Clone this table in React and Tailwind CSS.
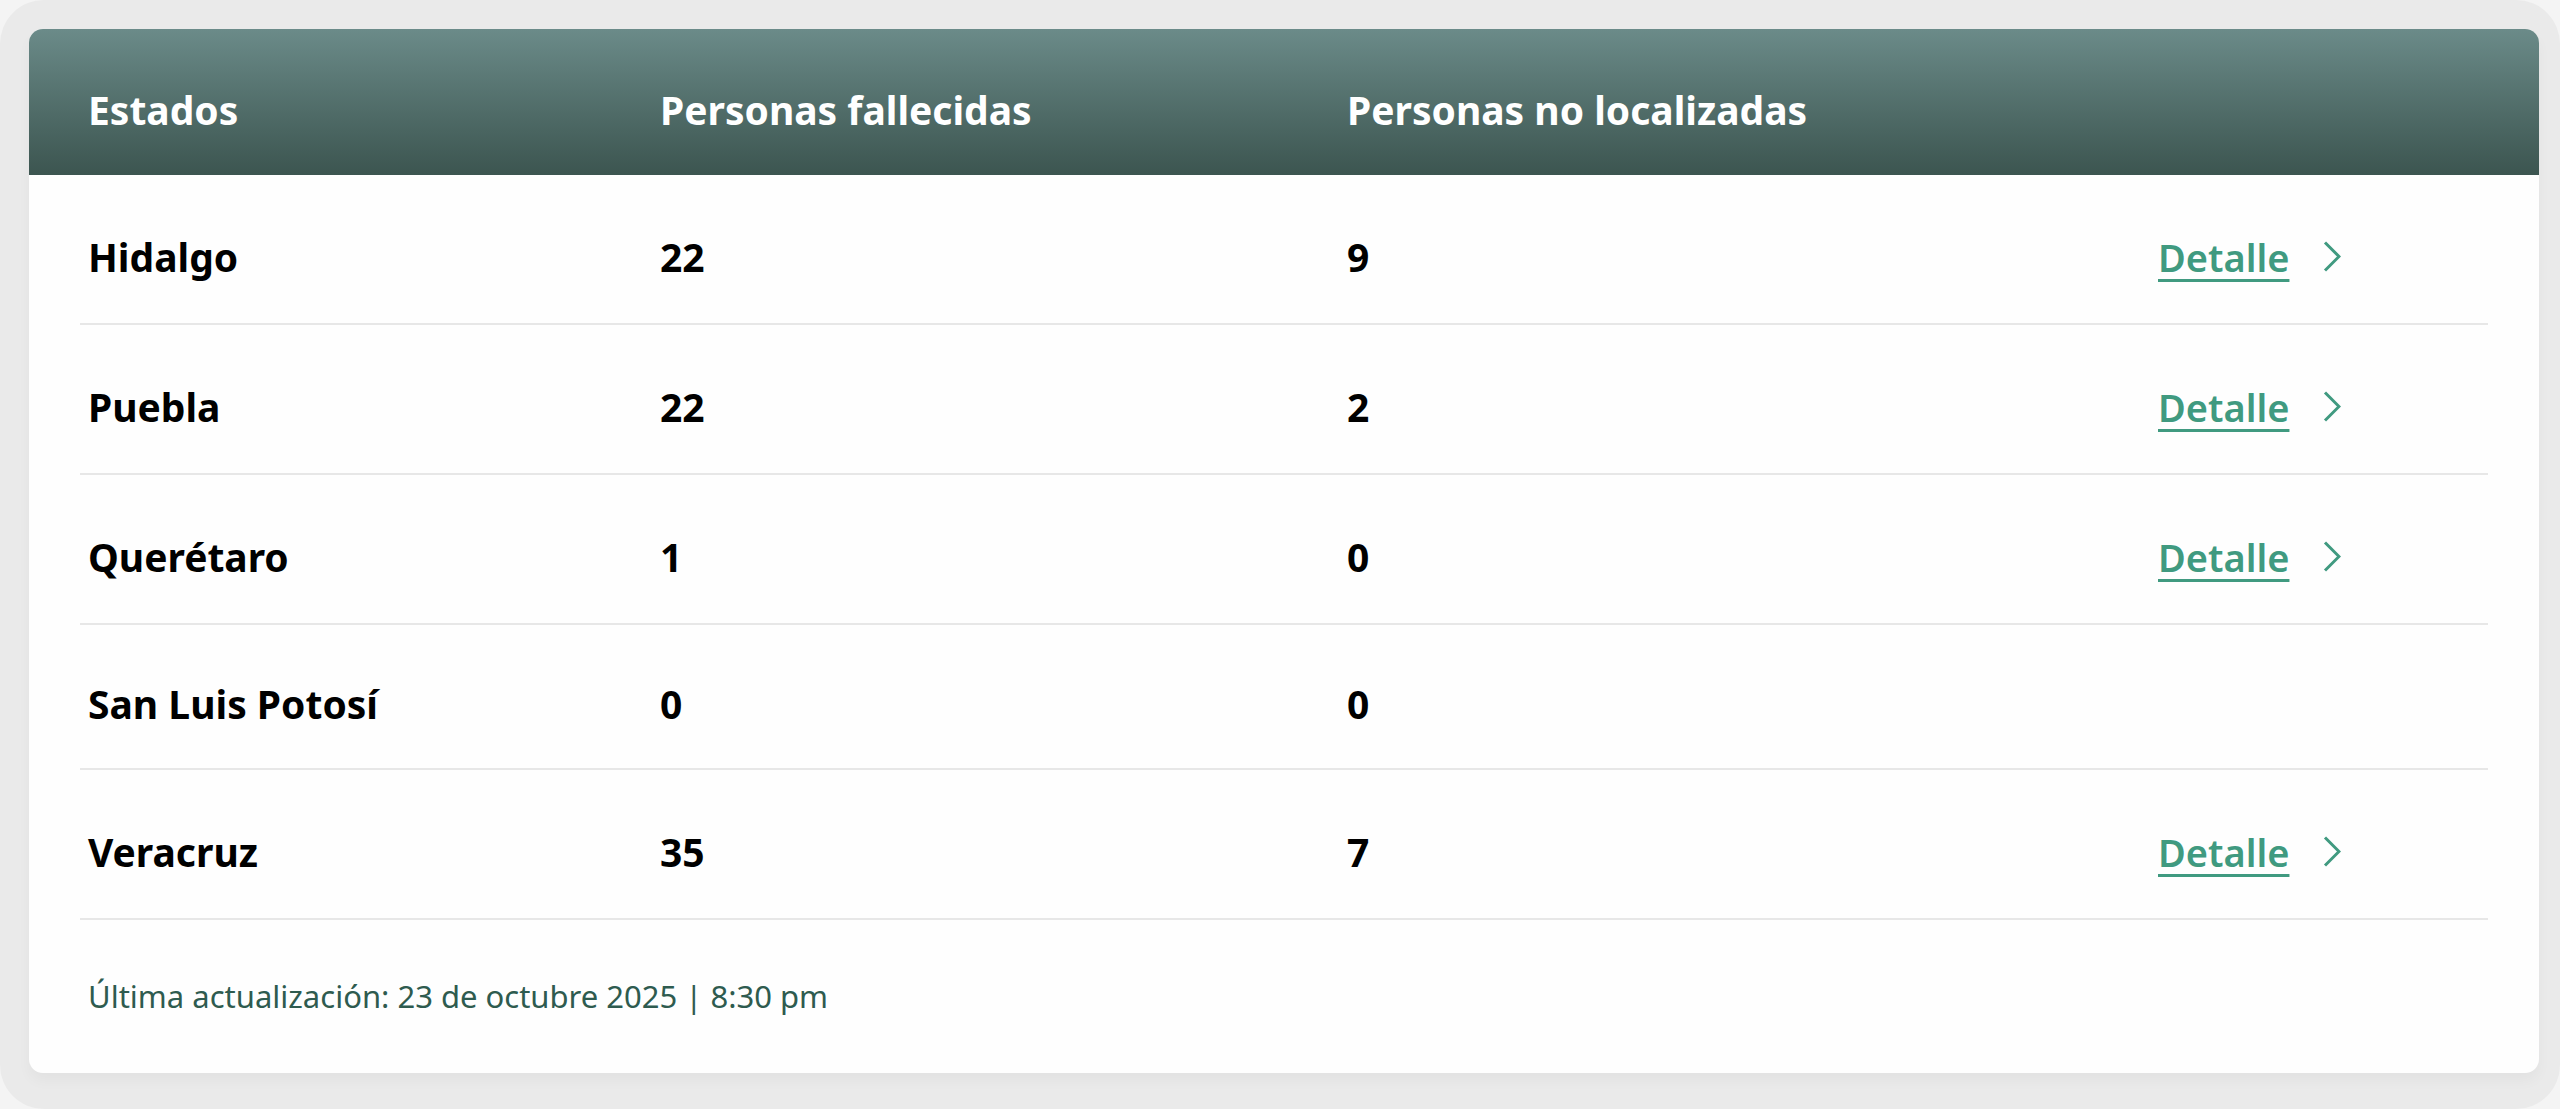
import React from "react";

const rows = [
  { estado: "Hidalgo", fallecidas: 22, noLocalizadas: 9, detalle: true },
  { estado: "Puebla", fallecidas: 22, noLocalizadas: 2, detalle: true },
  { estado: "Querétaro", fallecidas: 1, noLocalizadas: 0, detalle: true },
  { estado: "San Luis Potosí", fallecidas: 0, noLocalizadas: 0, detalle: false },
  { estado: "Veracruz", fallecidas: 35, noLocalizadas: 7, detalle: true },
];

const Chevron = () => (
  <svg width="18" height="31" viewBox="0 0 18 31" fill="none" className="ml-[34px]">
    <path d="M2 1.5 L16 15.5 L2 29.5" stroke="#409a80" strokeWidth="3" />
  </svg>
);

const App = () => {
  return (
    <div className="min-h-screen bg-[#f4f4f4] font-['Noto_Sans','Open_Sans',sans-serif]">
      <div className="h-[1109px] rounded-[44px] bg-[#eaeaea] pl-[29px] pr-[21px] pt-[29px] pb-[36px]">
        <div className="rounded-[14px] bg-[#fefefe] overflow-hidden shadow-[0_8px_14px_rgba(0,0,0,0.035)]">
          <div className="bg-gradient-to-b from-[#6b8b89] to-[#3c5550] px-[51px] pt-[54px] pb-[38px]">
            <div className="grid grid-cols-[572px_687px_1fr_338px] text-[39px] leading-[54px] font-bold text-white">
              <div className="pl-2">Estados</div>
              <div className="pl-2">Personas fallecidas</div>
              <div className="pl-2">Personas no localizadas</div>
              <div />
            </div>
          </div>

          <div className="px-[51px]">
            {rows.map((r) => (
              <div
                key={r.estado}
                className="grid grid-cols-[572px_687px_1fr_338px] items-center pt-[52px] pb-[37px] border-b-2 border-[#e7e7e7] text-[39px] leading-[54px] font-bold text-black"
              >
                <div className="pl-2">{r.estado}</div>
                <div className="pl-2">{r.fallecidas}</div>
                <div className="pl-2">{r.noLocalizadas}</div>
                <div className="pl-2">
                  {r.detalle && (
                    <div className="flex items-center h-[59px]">
                      <a
                        href="#"
                        className="text-[38px] font-semibold text-[#409a80] underline decoration-[3px] underline-offset-[7px]"
                      >
                        Detalle
                      </a>
                      <Chevron />
                    </div>
                  )}
                </div>
              </div>
            ))}
            <p className="pl-2 pt-[54px] pb-[55px] text-[31px] leading-[44px] text-[#2e5b4f]">
              Última actualización: 23 de octubre 2025 | 8:30 pm
            </p>
          </div>
        </div>
      </div>
    </div>
  );
};

export default App;
